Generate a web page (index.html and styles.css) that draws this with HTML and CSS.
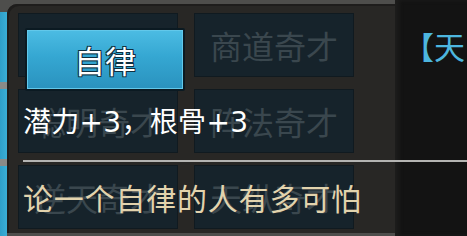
FILE: index.html
```html
<!DOCTYPE html>
<html lang="zh-CN">
<head>
    <meta charset="UTF-8">
    <meta name="viewport" content="width=device-width, initial-scale=1.0">
    <title>天赋</title>
    <link rel="stylesheet" href="styles.css">
</head>
<body>
    <div class="scene">
        <div class="side-tabs">
            <div class="tab"></div>
            <div class="tab"></div>
            <div class="tab"></div>
        </div>

        <div class="panel">
            <div class="talent-grid">
                <div class="talent-cell"></div>
                <div class="talent-cell">商道奇才</div>
                <div class="talent-cell">聪明奇才</div>
                <div class="talent-cell">阵法奇才</div>
                <div class="talent-cell">逆天奇才</div>
                <div class="talent-cell">天纵奇才</div>
            </div>
        </div>

        <div class="detail">
            <div class="detail-title">【天</div>
        </div>

        <!-- Tooltip over the grid -->
        <div class="tooltip">
            <div class="talent-button">自律</div>
            <div class="talent-stats">潜力+3，根骨+3</div>
            <div class="tooltip-line"></div>
            <div class="talent-desc">论一个自律的人有多可怕</div>
        </div>
    </div>
</body>
</html>
```

FILE: styles.css
```css
body {
    margin: 0;
    width: 467px;
    height: 236px;
    overflow: hidden;
    background: #121212;
    font-family: "Noto Sans CJK SC", "Noto Sans", sans-serif;
}

.scene {
    position: relative;
    display: flex;
    width: 467px;
    height: 236px;
    background: #4e4e4c;
}

/* Blue tabs peeking out on the left */
.side-tabs {
    width: 7px;
    margin-top: 12px;
    display: flex;
    flex-direction: column;
    gap: 7px;
    background: #8a8a88;
}

.tab {
    flex: 1;
    background: linear-gradient(90deg, #2f9fc9, #3aaed6);
}

.panel {
    width: 388px;
    margin-top: 4px;
    margin-bottom: 3px;
    padding: 9px 0 0 11px;
    box-sizing: border-box;
    background: #282725;
    border-radius: 10px 0 0 0;
    box-shadow: inset 2px 2px 0 #1e1d1c;
}

.talent-grid {
    display: grid;
    grid-template-columns: 160px 160px;
    grid-template-rows: 64px 64px 64px;
    column-gap: 16px;
    row-gap: 12px;
}

.talent-cell {
    display: flex;
    align-items: center;
    justify-content: center;
    background: #16232b;
    border: 1px solid #101a20;
    font-size: 32px;
    color: #3a474e;
}

.detail {
    flex: 1;
    padding: 28px 0 0 8px;
    background: #131313;
    box-shadow: inset 4px 0 4px #1d1d1c;
}

.detail-title {
    font-size: 31px;
    line-height: 36px;
    color: #4db6df;
    white-space: nowrap;
}

/* Tooltip */
.tooltip {
    position: absolute;
    top: 0;
    left: 0;
    right: 0;
    bottom: 0;
    padding-left: 23px;
    display: flex;
    flex-direction: column;
}

.talent-button {
    width: 156px;
    height: 59px;
    margin: 28px 0 0 2px;
    display: flex;
    align-items: center;
    justify-content: center;
    border: 2px solid #0b1a22;
    border-radius: 2px;
    background: linear-gradient(180deg, #4cbce3 0%, #35a7d2 45%, #2a92be 100%);
    box-shadow: inset 0 0 0 1px #62c8ea;
    font-size: 31px;
    color: #ffffff;
    text-shadow: 1px 1px 0 #0d2f40, -1px -1px 0 #0d2f40, 1px -1px 0 #0d2f40, -1px 1px 0 #0d2f40;
}

.talent-stats {
    margin-top: 16px;
    font-family: "DejaVu Sans", "Noto Sans CJK SC", sans-serif;
    font-size: 28px;
    line-height: 32px;
    letter-spacing: 0.3px;
    color: #ffffff;
    white-space: nowrap;
}

.tooltip-line {
    height: 2px;
    margin-top: 21px;
    background: #b4b4b2;
}

.talent-desc {
    margin-top: 18px;
    font-size: 30px;
    line-height: 34px;
    letter-spacing: 0.8px;
    color: #e2d3ad;
    white-space: nowrap;
}
```
